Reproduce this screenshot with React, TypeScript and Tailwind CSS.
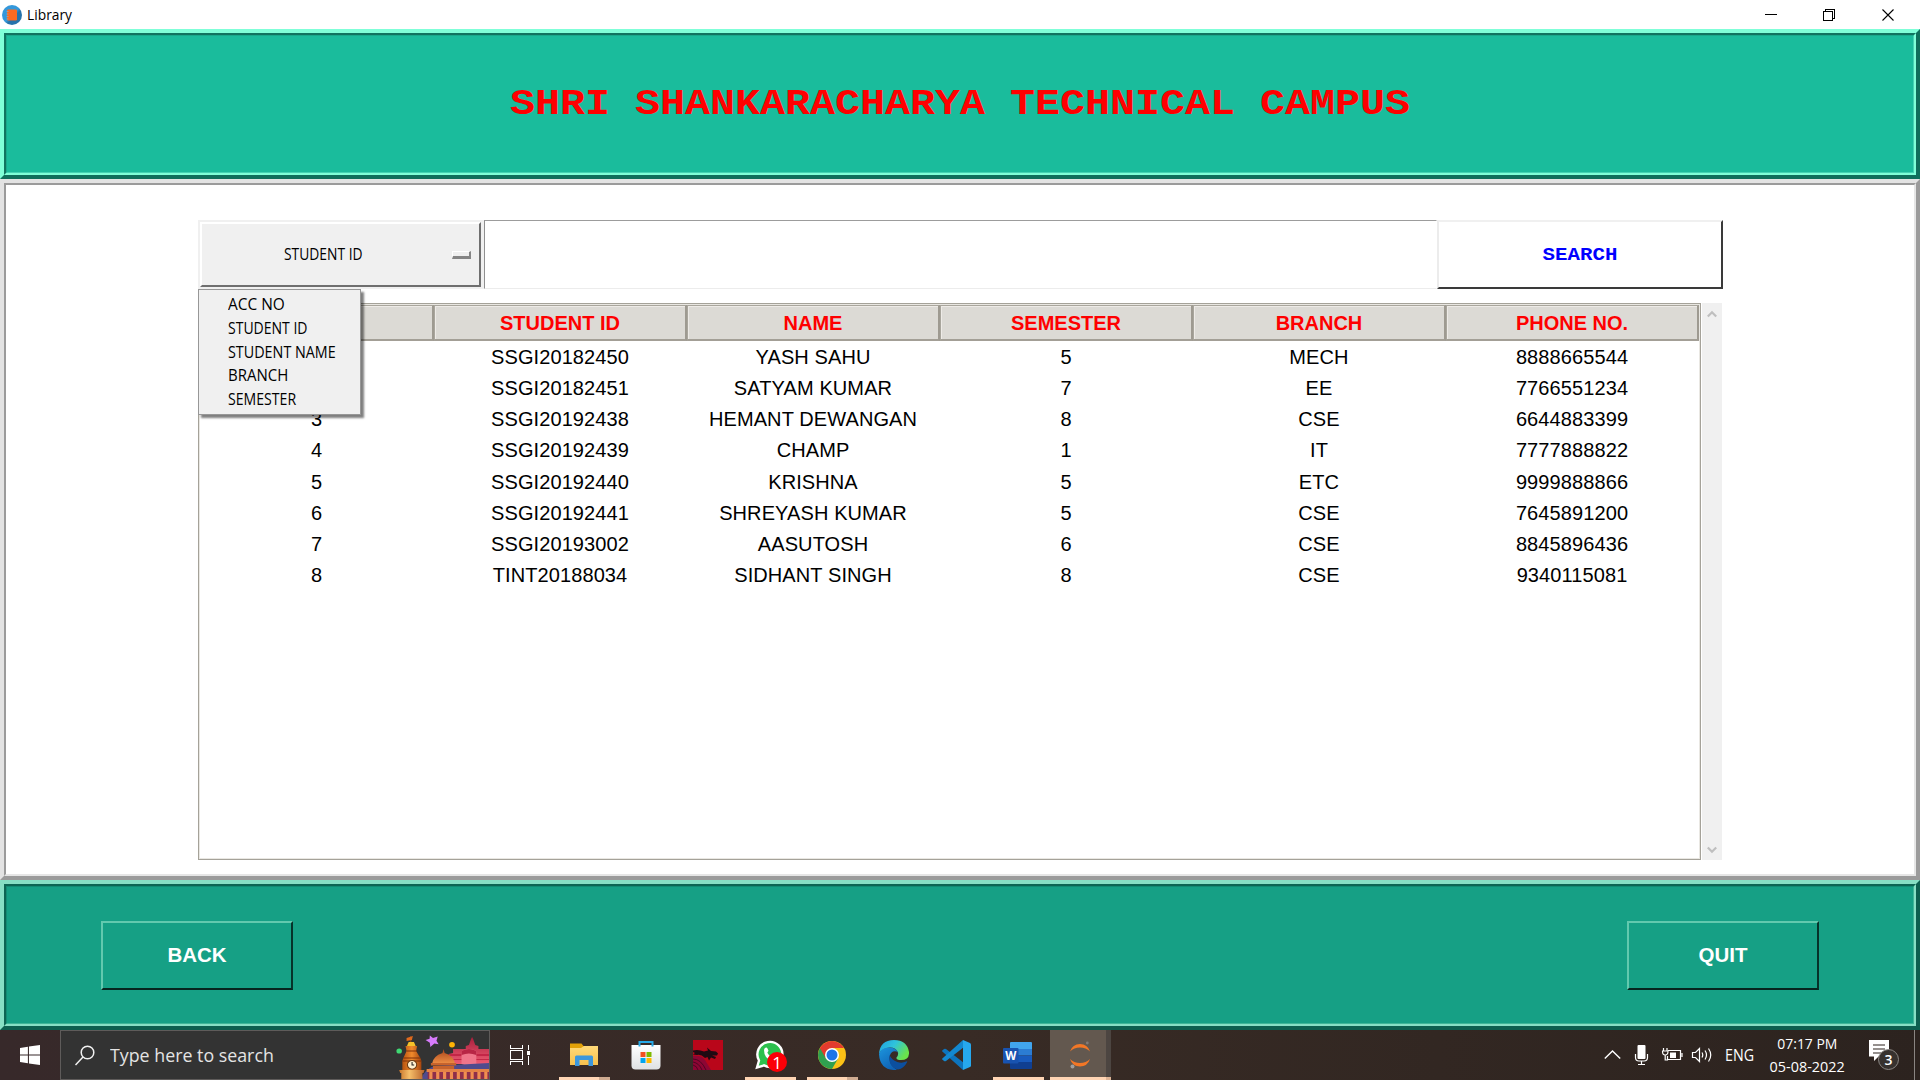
import React from "react";

const HEADERS = ["STUDENT ID", "NAME", "SEMESTER", "BRANCH", "PHONE NO."];

// The first two serial numbers sit under the open menu and are left blank.
const ROWS = [
  ["", "SSGI20182450", "YASH SAHU", "5", "MECH", "8888665544"],
  ["", "SSGI20182451", "SATYAM KUMAR", "7", "EE", "7766551234"],
  ["3", "SSGI20192438", "HEMANT DEWANGAN", "8", "CSE", "6644883399"],
  ["4", "SSGI20192439", "CHAMP", "1", "IT", "7777888822"],
  ["5", "SSGI20192440", "KRISHNA", "5", "ETC", "9999888866"],
  ["6", "SSGI20192441", "SHREYASH KUMAR", "5", "CSE", "7645891200"],
  ["7", "SSGI20193002", "AASUTOSH", "6", "CSE", "8845896436"],
  ["8", "TINT20188034", "SIDHANT SINGH", "8", "CSE", "9340115081"],
];

const MENU = [
  { label: "ACC NO", fit: "scale-x-[0.996]" },
  { label: "STUDENT ID", fit: "scale-x-[0.903]" },
  { label: "STUDENT NAME", fit: "scale-x-[0.925]" },
  { label: "BRANCH", fit: "scale-x-[0.969]" },
  { label: "SEMESTER", fit: "scale-x-[0.91]" },
];

const COLS = "grid grid-cols-[234px_253px_253px_253px_253px_253px]";
const UI = "font-['Open_Sans',sans-serif] whitespace-nowrap";
const ARIAL = "font-['Liberation_Sans',sans-serif]";

function TitleBar() {
  return (
    <div className="flex h-[29px] items-center bg-white">
      <svg className="ml-[2px] shrink-0" width="20" height="20" viewBox="0 0 20 20">
        <defs>
          <linearGradient id="lib" x1="0" y1="0" x2="1" y2="1">
            <stop offset="0.5" stopColor="#3498db" />
            <stop offset="0.6" stopColor="#2673ab" />
          </linearGradient>
        </defs>
        <circle cx="10" cy="10" r="10" fill="url(#lib)" />
        <rect x="5" y="4.500" width="10" height="11" rx="1.200" fill="#fd6a21" />
        <path d="M4.500 6.500h2M4.500 9h2M4.500 11.500h2M4.500 14h2" stroke="#9aa0a6" strokeWidth="1" />
      </svg>
      <span className={`${UI} ml-[5px] origin-left scale-x-[0.92] text-[15px] leading-none text-black`}>Library</span>
      <svg className="ml-auto mr-[25px]" width="130" height="14" viewBox="0 0 130 14" fill="none" stroke="#000" shapeRendering="crispEdges">
        <path d="M0 6.500h12" />
        <path d="M58.500 3.500h9v9h-9zM60.500 3V1.500h9v9h-2" />
        <path d="M117.500 1.500l11 11M128.500 1.500l-11 11" shapeRendering="auto" strokeWidth="1.100" />
      </svg>
    </div>
  );
}

function HeaderFrame() {
  return (
    <div className="h-[150px] border-4 border-b-[#0f6f5c] border-l-[#7fffd8] border-r-[#0f6f5c] border-t-[#7fffd8]">
      <div className="h-full border-2 border-b-[#7fffd8] border-l-[#107460] border-r-[#7fffd8] border-t-[#107460]">
        <div className="flex h-full items-center justify-center border border-b-[#45d3b4] border-l-[#19a88b] border-r-[#45d3b4] border-t-[#19a88b] bg-[#1abc9c] pt-[2px]">
          <h1 className="scale-y-[0.88] whitespace-pre font-['Liberation_Mono',monospace] text-[41.660px] font-bold leading-none text-[#ff0000]">
            SHRI SHANKARACHARYA TECHNICAL CAMPUS
          </h1>
        </div>
      </div>
    </div>
  );
}

function OptionMenu() {
  return (
    <div className="relative h-[69px] w-[286px] bg-[#f0f0f0] p-[2px]">
      <div className="flex h-[65px] w-[281px] items-center border-2 border-b-[#6f6f6f] border-l-white border-r-[#6f6f6f] border-t-white bg-[#f0f0f0]">
        <span className={`${UI} ml-[82px] w-[168px] origin-left scale-x-[0.893] pt-[1px] text-[15.500px] leading-none text-black`}>STUDENT ID</span>
        <span className="h-[8px] w-[19px] border-b-[3px] border-l border-r-2 border-t border-b-[#858585] border-l-white border-r-[#858585] border-t-white bg-[#f0f0f0]" />
      </div>
      <div className="absolute left-0 top-[69px] z-10 h-[126px] w-[163px] border border-[#979797] bg-[#f0f0f0] pt-[3px] shadow-[3px_3px_2px_rgba(0,0,0,0.5)]">
        {MENU.map((m) => (
          <div key={m.label} className="flex h-[23.750px] items-center pl-[29px]">
            <span className={`${UI} ${m.fit} origin-left text-[15.500px] leading-none text-black`}>{m.label}</span>
          </div>
        ))}
      </div>
    </div>
  );
}

function Heading({ children }: { children?: React.ReactNode }) {
  return (
    <div className="flex h-[36px] items-center justify-center border border-b-2 border-r-2 border-[#a9a69d] border-b-[#a39f96] border-r-[#9e9a91] bg-[#dcdad5] shadow-[inset_1px_1px_0_#eeebe7]">
      <span className="whitespace-nowrap text-[20px] font-bold leading-none text-[#ff0000]">{children}</span>
    </div>
  );
}

function Table() {
  return (
    <div className="flex">
      <div className={`${ARIAL} h-[557px] w-[1503px] border border-[#a5a299] bg-white p-px shadow-[inset_0_0_0_1px_#e9e7e2]`}>
        <div className={COLS}>
          <Heading />
          {HEADERS.map((h) => (
            <Heading key={h}>{h}</Heading>
          ))}
        </div>
        {ROWS.map((r) => (
          <div key={r[1]} className={`${COLS} h-[31.250px] items-center text-center text-[20px] leading-none text-black`}>
            {r.map((c, i) => (
              <span key={i} className="whitespace-nowrap pr-[1px] tracking-[0.1px]">{c}</span>
            ))}
          </div>
        ))}
      </div>
      <div className="ml-[1px] flex h-[557px] w-[20px] flex-col items-center justify-between bg-[#f0f0f0] pb-[6px] pt-[7px]">
        <svg width="10" height="8" viewBox="0 0 10 8" fill="none" stroke="#bfbfbf" strokeWidth="2.200">
          <path d="M0.800 6.500L5 2.200l4.200 4.300" />
        </svg>
        <svg width="10" height="8" viewBox="0 0 10 8" fill="none" stroke="#bfbfbf" strokeWidth="2.200">
          <path d="M0.800 1.500L5 5.800l4.200-4.300" />
        </svg>
      </div>
    </div>
  );
}

function Body() {
  return (
    <div className="h-[701px] border-4 border-b-[#9b9b9b] border-l-[#e3e3e3] border-r-[#9b9b9b] border-t-[#e3e3e3]">
      <div className="h-full border-2 border-b-[#e6e6e6] border-l-[#9b9b9b] border-r-[#e6e6e6] border-t-[#9b9b9b] bg-white pl-[192px] pt-[35px]">
        <div className="flex h-[69px]">
          <OptionMenu />
          <div className="h-[69px] w-[953px] border border-b-[#ececec] border-l-[#8f8f8f] border-r-white border-t-[#9c9c9c] bg-white" />
          <button className="flex h-[69px] w-[286px] items-center justify-center border-2 border-b-[#3a3a3a] border-l-[#ececec] border-r-[#3a3a3a] border-t-[#f0f0f0] bg-white pt-[1px] font-['Liberation_Mono',monospace] text-[20.800px] font-bold leading-none text-[#0000ff]">
            <span className="scale-y-[0.9]">SEARCH</span>
          </button>
        </div>
        <div className="mt-[14px]">
          <Table />
        </div>
      </div>
    </div>
  );
}

function FootButton({ children }: { children: React.ReactNode }) {
  return (
    <button className={`${ARIAL} h-[69px] w-[192px] border-2 border-b-[#06251f] border-l-[#62c9ae] border-r-[#06332a] border-t-[#62c9ae] text-[20.500px] font-bold leading-none text-white`}>
      {children}
    </button>
  );
}

function Footer() {
  return (
    <div className="h-[150px] border-4 border-b-[#0d5f4f] border-l-[#87dfc4] border-r-[#0d5f4f] border-t-[#87dfc4]">
      <div className="h-full border-2 border-b-[#87dfc4] border-l-[#0d6553] border-r-[#87dfc4] border-t-[#0d6553]">
        <div className="flex h-full items-start justify-between border border-b-[#3fb698] border-l-[#138b73] border-r-[#3fb698] border-t-[#138b73] bg-[#16a085] px-[94px] pt-[34px]">
          <FootButton>BACK</FootButton>
          <FootButton>QUIT</FootButton>
        </div>
      </div>
    </div>
  );
}

function SearchArt() {
  return (
    <svg className="ml-auto shrink-0" width="93" height="48" viewBox="0 0 88 48" preserveAspectRatio="none">
      <defs>
        <linearGradient id="tower" x1="0" x2="1">
          <stop offset="0" stopColor="#b8530f" />
          <stop offset="0.5" stopColor="#f08a2c" />
          <stop offset="1" stopColor="#a8460e" />
        </linearGradient>
        <linearGradient id="base" x1="0" x2="1">
          <stop offset="0" stopColor="#c9762b" />
          <stop offset="0.4" stopColor="#f6bf6a" />
          <stop offset="1" stopColor="#b8622a" />
        </linearGradient>
        <linearGradient id="fort" x1="0" y1="0" x2="0" y2="1">
          <stop offset="0" stopColor="#a81f3c" />
          <stop offset="1" stopColor="#ee5a72" />
        </linearGradient>
        <linearGradient id="dome" x1="0" y1="0" x2="0" y2="1">
          <stop offset="0" stopColor="#a8431a" />
          <stop offset="1" stopColor="#f09045" />
        </linearGradient>
      </defs>
      <circle cx="3" cy="20" r="2.600" fill="#3fd873" />
      <path d="M32 4.500l3 2.500 4.500-1.500-1.200 4.200 2 3.500-4-.7-3.800 3.500-.5-4.200-4-2.800 3.800-1.200z" fill="#d77bfb" />
      <circle cx="53" cy="13.700" r="2.700" fill="#ffb405" />
      <path d="M50 23l4-1v-4h12v-3l3-1 2-6 1-2 1 2 2 6 3 1v3h10v15H50z" fill="url(#fort)" />
      <path d="M50 23h38v2H50zM50 28h38v1H50z" fill="#c32647" />
      <path d="M62 20q7-4 14 0v13q-7 3-14 0z" fill="#f0758a" />
      <path d="M62 20q7-4 14 0v4q-7-3-14 0z" fill="#b82645" />
      <path d="M24 48q2-9 12-13l52-3v16z" fill="#504b8d" />
      <path d="M34 33q1-8 10-11l1-4 1 4q9 3 10 11z" fill="url(#dome)" />
      <path d="M33 32h24v2.500H33zM35 35h20v4H35z" fill="#c7632c" />
      <path d="M30 39h58v9H30z" fill="#8e2f4a" />
      <path d="M29 38h59v3H29z" fill="#e58346" />
      <path d="M33 41v7M39.500 41v7M46 41v7M52.500 41v7M59 41v7M65.500 41v7M72 41v7M78.500 41v7M85 41v7" stroke="#f08e50" strokeWidth="3" />
      <path d="M14 12V5" stroke="#9b4a12" strokeWidth="1" />
      <path d="M10 7l6-2-1 4-5 1z" fill="#e06a1e" />
      <path d="M12 11h5l2 5H10z" fill="#f6c229" />
      <path d="M9 15h11l-1 5 4 7 1 3v10H6V30l1-3 3-7z" fill="url(#tower)" />
      <path d="M10 20h10M7 27h16M6 30h18" stroke="#7c310b" strokeWidth="1" />
      <circle cx="15.200" cy="33.800" r="4.400" fill="#fff0cf" stroke="#6d3a12" strokeWidth="1" />
      <path d="M15.200 31v3h2" stroke="#222" strokeWidth="1" fill="none" />
      <path d="M3 39h24l-1 3H4zM5 42h20v6H5z" fill="url(#base)" />
    </svg>
  );
}

function TaskButton({ icon, run, stack, active }: { icon: React.ReactNode; run?: boolean; stack?: boolean; active?: boolean }) {
  return (
    <div className="relative flex h-[50px] w-[62px] items-center justify-center">
      {active && <div className="absolute inset-y-0 left-[1px] w-[56px] bg-[#63584f]" />}
      {active && <div className="absolute inset-y-0 left-[57px] w-[5px] bg-[#4c4541]" />}
      {run && (
        <div className="absolute bottom-0 left-[6px] flex h-[3px]">
          <div className={stack ? "w-[40px] bg-[#ffd5b4]" : active ? "-ml-[5px] w-[56px] bg-[#ffd5b4]" : "w-[51px] bg-[#ffd5b4]"} />
          {(stack || active) && <div className={stack ? "w-[11px] bg-[#cfab91]" : "w-[5px] bg-[#dfb596]"} />}
        </div>
      )}
      <div className="relative">{icon}</div>
    </div>
  );
}

const Explorer = (
  <svg width="28" height="24" viewBox="0 0 28 24">
    <defs>
      <linearGradient id="fold" x1="0" y1="0" x2="0" y2="1">
        <stop offset="0" stopColor="#ffd978" />
        <stop offset="1" stopColor="#f7c14e" />
      </linearGradient>
    </defs>
    <path d="M0 .5h11.500l2 2.500H28v8H0z" fill="#e2a108" />
    <path d="M0 5h11l3-2h14v19H0z" fill="url(#fold)" />
    <path d="M5 23V14q0-1.500 1.500-1.500h15Q23 12.500 23 14v9h-4.500v-6h-9v6z" fill="#3d97dc" />
  </svg>
);

const Store = (
  <svg width="30" height="30" viewBox="0 0 30 30">
    <defs>
      <linearGradient id="bag" x1="0" y1="0" x2="0" y2="1">
        <stop offset="0" stopColor="#ffffff" />
        <stop offset="1" stopColor="#dfe1e3" />
      </linearGradient>
    </defs>
    <path d="M.5 5h29v20.500q0 4-4 4h-21q-4 0-4-4z" fill="url(#bag)" />
    <path d="M8.500 6.500V2h13v4.500" fill="none" stroke="#27a9e8" strokeWidth="2" />
    <path d="M9.500 12h5v5h-5z" fill="#f25022" />
    <path d="M15.500 12h5v5h-5z" fill="#7fba00" />
    <path d="M9.500 18h5v5h-5z" fill="#00a4ef" />
    <path d="M15.500 18h5v5h-5z" fill="#ffb900" />
  </svg>
);

const Dragon = (
  <svg width="30" height="30" viewBox="0 0 30 30">
    <path d="M0 0h30v30H0z" fill="#b9061a" />
    <path d="M0 16q8-1 12 4l6 10H0z" fill="#8d0634" />
    <path d="M0 19q8 0 13 11M0 22q6 1 9 8M0 25q4 1 5 5" stroke="#4f0523" fill="none" />
    <path d="M0 10.500q5-1.500 11 1l4-1-1-3 4 3.500 5 .5 2 2-1 2h-5l4 1.500-1 2-4-1.500-2 3-1.500-3.500-2.500 1q-4-4-8-3l-4-.5 2-1.500-2-1z" fill="#1f0a12" />
  </svg>
);

const WhatsApp = (
  <div className="relative h-[30px] w-[30px]">
    <svg width="30" height="30" viewBox="0 0 30 30">
      <path d="M2 27.500l2-7A12.500 12.500 0 1 1 9 25.400z" fill="#2cc04d" stroke="#fff" strokeWidth="2.400" />
      <path d="M9.500 8.500q2-2 3 0l1 2.300-1.200 2q1.500 3 4.500 4.500l1.600-1.700 3.300 1.700q0 4-4 3.800Q9 19 9 10z" fill="#fff" />
    </svg>
    <span className="absolute left-[12px] top-[12px] flex h-[20px] w-[20px] items-center justify-center rounded-full bg-[#fb0007] font-['Open_Sans',sans-serif] text-[17px] leading-none text-white">1</span>
  </div>
);

const Chrome = (
  <svg width="28" height="28" viewBox="0 0 28 28">
    <circle cx="14" cy="14" r="14" fill="#fbc116" />
    <path d="M14 14L1.880 7A14 14 0 0 0 14 28l6.100-10.500z" fill="#30a04f" />
    <path d="M1.880 7A14 14 0 0 1 26.120 7H14L7.900 17.500z" fill="#e33b2e" />
    <circle cx="14" cy="14" r="7" fill="#fff" />
    <circle cx="14" cy="14" r="5.500" fill="#1f74e8" />
  </svg>
);

const Edge = (
  <svg width="30" height="30" viewBox="0 0 30 30">
    <defs>
      <linearGradient id="e1" x1="0" y1="0" x2="1" y2="0.500">
        <stop offset="0" stopColor="#1e9fe0" />
        <stop offset="0.500" stopColor="#2fc3dc" />
        <stop offset="1" stopColor="#6ae34b" />
      </linearGradient>
      <linearGradient id="e2" x1="0" y1="0" x2="0.600" y2="1">
        <stop offset="0" stopColor="#1c95dd" />
        <stop offset="1" stopColor="#0f62b4" />
      </linearGradient>
    </defs>
    <path d="M0 14Q1 0 15 0q13 0 15 12 .500 8-8 8-5 0-4.500-2.500 2-2 1.500-5Q17 7.500 11 7.500 3 8 0 14z" fill="url(#e1)" />
    <path d="M0 14Q2 7.500 10 7.500q7 0 9 5-2-2-5-1-3 1.500-3.500 6Q10 25 18 30 1 31 0 14z" fill="url(#e2)" />
    <path d="M10.500 15Q9 27 19 29.500q6-1 9.200-7.500.200-1-1-.500-4 2-9 .500-5.500-2-7.700-7z" fill="#0c4f9e" />
  </svg>
);

const VSCode = (
  <svg width="30" height="30" viewBox="0 0 30 30">
    <path d="M.8 11L3 9q1-.7 2 0l18 14-1 7z" fill="#0d74bd" />
    <path d="M.8 19L3 21q1 .7 2 0L23 7l-1-7z" fill="#1388d0" />
    <path d="M22 0l7 3q1 .5 1 1.500v21q0 1-1 1.500l-7 3z" fill="#26a8ee" />
  </svg>
);

const Word = (
  <svg className="-ml-[1px]" width="29" height="27" viewBox="0 0 29 27">
    <path d="M7 1q0-1 1-1h20q1 0 1 1v6H7z" fill="#41a5ee" />
    <path d="M7 7h22v6.500H7z" fill="#2b7cd3" />
    <path d="M7 13.500h22V20H7z" fill="#185abd" />
    <path d="M7 20h22v6q0 1-1 1H8q-1 0-1-1z" fill="#103f91" />
    <rect x="0" y="6" width="15.500" height="15.500" rx="1" fill="#1853b0" />
    <text x="7.700" y="17.800" textAnchor="middle" fontFamily="Open Sans, sans-serif" fontWeight="700" fontSize="11.500" fill="#fff">W</text>
  </svg>
);

const Jupyter = (
  <svg className="-ml-[1px]" width="22" height="28" viewBox="0 0 22 28">
    <path d="M1 10.500Q3.500 3 11 3t10 7.500Q17 6.500 11 6.500T1 10.500z" fill="#f37726" />
    <path d="M1 18Q3.500 25.500 11 25.500T21 18q-4 4-10 4T1 18z" fill="#f37726" />
    <circle cx="18.300" cy="2" r="1.400" fill="#7f7a78" />
    <circle cx="3.500" cy="25.500" r="2" fill="#9e9e9e" />
  </svg>
);

function Taskbar() {
  return (
    <div className="flex h-[50px] items-center overflow-hidden bg-linear-to-r from-[#37292a] via-[#382b25] to-[#2c231f]">
      <div className="flex w-[60px] items-center justify-center">
        <svg width="20" height="20" viewBox="0 0 19 20" fill="#fff" preserveAspectRatio="none">
          <path d="M0 3l7.500-1.200v7.700H0zM8.500 1.600L19 0v9.500H8.500zM0 10.500h7.500v7.700L0 17zM8.500 10.500H19V20L8.500 18.400z" />
        </svg>
      </div>
      <div className="flex h-[50px] w-[430px] items-center overflow-hidden border border-[#5e5b5a] bg-[#333333] pl-[14px]">
        <svg className="shrink-0" width="20" height="21" viewBox="0 0 20 21" fill="none" stroke="#f2f2f2" strokeWidth="1.500">
          <circle cx="12.500" cy="7.500" r="6.300" />
          <path d="M8 12L.5 20" />
        </svg>
        <span className={`${UI} ml-[15px] origin-left scale-x-[0.937] text-[19px] leading-none text-[#e4e4e4]`}>Type here to search</span>
        <SearchArt />
      </div>
      <div className="flex w-[63px] pl-[20px]">
        <svg width="20" height="20" viewBox="0 0 20 20" fill="none" stroke="#fff" shapeRendering="crispEdges">
          <path d="M.5 0v3.500h12V0M.5 5.500h12v9H.5zM.5 20v-3.500h12V20M18.500 0v5M18.500 11v9" />
          <path d="M17 6h3v4h-3z" fill="#fff" stroke="none" />
        </svg>
      </div>
      <TaskButton icon={Explorer} run stack />
      <TaskButton icon={Store} />
      <TaskButton icon={Dragon} />
      <TaskButton icon={WhatsApp} run />
      <TaskButton icon={Chrome} run stack />
      <TaskButton icon={Edge} />
      <TaskButton icon={VSCode} />
      <TaskButton icon={Word} run />
      <TaskButton icon={Jupyter} run active />
      <div className="ml-auto flex h-[50px] items-center text-white">
        <svg width="109" height="22" viewBox="0 0 109 22" fill="none" stroke="#fff">
          <path d="M.8 14.500L8.500 7l7.700 7.500" strokeWidth="1.400" />
          <rect x="33.500" y="1" width="8" height="14" rx="1" fill="#fff" stroke="none" />
          <path d="M31.500 10v3.500q0 3.500 3.500 3.500h5q3.500 0 3.500-3.500V10M37.500 17v3M34 20.500h7" strokeWidth="1.200" />
          <path d="M64 6.500h12.500v9H63.500V12M78 9v4" strokeWidth="1.200" />
          <path d="M66 8.500h6v5.500h-6z" fill="#fff" stroke="none" />
          <path d="M59.500 4v3M63 4v3M58 7h6.500M58.500 7.500q0 3.500 2.700 3.500T64 7.500M61.200 11v5H64" strokeWidth="1.200" />
          <path d="M88.500 8.500h3l4-4v13l-4-4h-3z" strokeWidth="1.200" />
          <path d="M98 8.500q1.500 2.500 0 5M101 6.500q3 4.500 0 9M104.500 4.500q4.500 6.500 0 13" strokeWidth="1.200" />
        </svg>
        <span className={`${UI} ml-[12px] w-[44px] origin-left scale-x-[0.92] pt-[1px] text-[15.500px] leading-none`}>ENG</span>
        <div className={`${UI} flex w-[76px] flex-col items-center pb-[1px] text-[15px] leading-[22.500px]`}>
          <span className="scale-x-[0.93]">07:17 PM</span>
          <span className="scale-x-[0.96]">05-08-2022</span>
        </div>
        <div className="relative ml-[24px] h-[30px] w-[30px]">
          <svg width="30" height="30" viewBox="0 0 30 30">
            <path d="M0 0h20v16.500H9.500L5 21v-4.500H0z" fill="#fff" />
            <path d="M4 5h12M4 9h12M4 13h8" stroke="#2c231f" strokeWidth="1.200" />
          </svg>
          <span className={`${UI} absolute left-[9px] top-[9px] flex h-[21px] w-[21px] items-center justify-center rounded-full border border-[#8b8784] bg-[#37322f] text-[14px] font-semibold leading-none`}>3</span>
        </div>
        <div className="ml-[15px] h-[50px] w-[6px] border-l border-[#8a8582]" />
      </div>
    </div>
  );
}

export default function App() {
  return (
    <div className="flex h-[1080px] w-[1920px] flex-col overflow-hidden bg-white">
      <TitleBar />
      <HeaderFrame />
      <Body />
      <Footer />
      <Taskbar />
    </div>
  );
}
